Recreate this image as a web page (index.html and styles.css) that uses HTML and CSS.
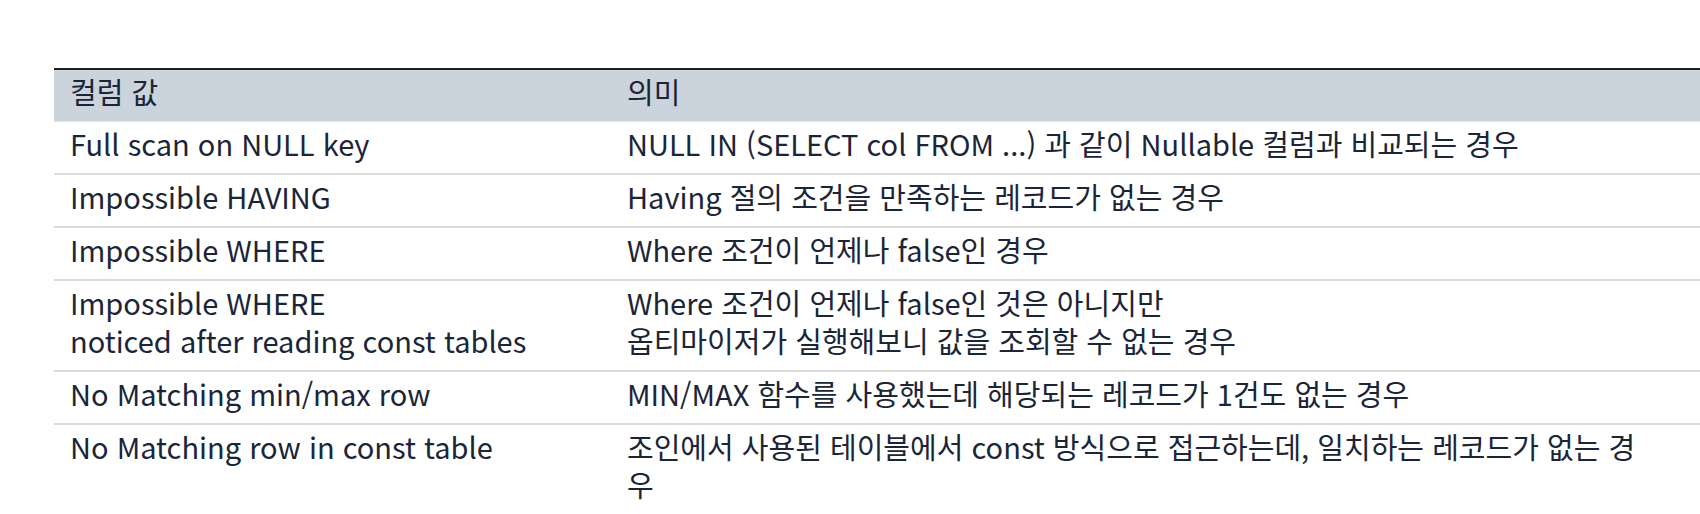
FILE: index.html
```html
<!DOCTYPE html>
<html lang="ko">
<head>
<meta charset="utf-8">
<link rel="stylesheet" href="styles.css">
</head>
<body>
<table class="info-table">
  <thead>
    <tr><th class="col-key">컬럼 값</th><th class="col-desc">의미</th></tr>
  </thead>
  <tbody>
    <tr><td>Full scan on NULL key</td><td class="desc">NULL IN (SELECT col FROM ...) 과 같이 Nullable 컬럼과 비교되는 경우</td></tr>
    <tr><td>Impossible HAVING</td><td class="desc">Having 절의 조건을 만족하는 레코드가 없는 경우</td></tr>
    <tr><td>Impossible WHERE</td><td class="desc">Where 조건이 언제나 false인 경우</td></tr>
    <tr><td>Impossible WHERE<br>noticed after reading const tables</td><td class="desc">Where 조건이 언제나 false인 것은 아니지만<br>옵티마이저가 실행해보니 값을 조회할 수 없는 경우</td></tr>
    <tr><td>No Matching min/max row</td><td class="desc">MIN/MAX 함수를 사용했는데 해당되는 레코드가 1건도 없는 경우</td></tr>
    <tr><td>No Matching row in const table</td><td class="desc">조인에서 사용된 테이블에서 const 방식으로 접근하는데, 일치하는 레코드가 없는 경우</td></tr>
  </tbody>
</table>
</body>
</html>
```
FILE: styles.css
```css
html, body {
  margin: 0;
  padding: 0;
  background: #ffffff;
  overflow: hidden;
}
body {
  font-family: "Noto Sans CJK KR", "Noto Sans", sans-serif;
  color: #1b2538;
}
.info-table {
  margin: 68px 0 0 54px;
  width: 1646px;
  border-collapse: collapse;
  font-size: 29px;
  line-height: 38px;
}
.info-table th,
.info-table td {
  text-align: left;
  font-weight: 400;
  vertical-align: top;
  padding: 2px 16px 11px;
}
.info-table td.desc {
  padding-right: 50px;
}
.info-table thead th {
  background: #cbd3dc;
  border-top: 2px solid #1f1f1f;
  border-bottom: 1px solid #e4e4e4;
}
.info-table tbody td {
  border-bottom: 2px solid #dcdcdc;
}
.col-key {
  width: 525px;
}
```
